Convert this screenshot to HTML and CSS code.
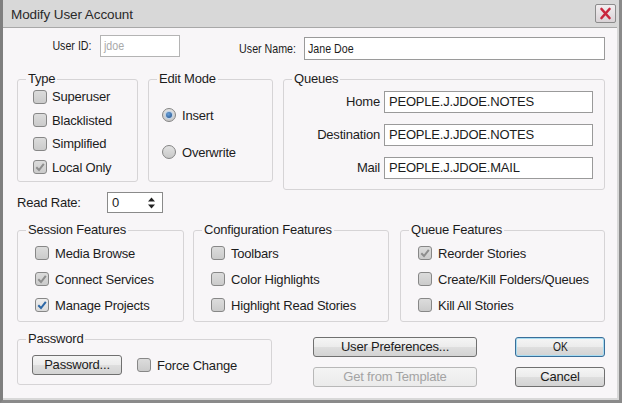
FILE: index.html
```html
<!DOCTYPE html>
<html>
<head>
<meta charset="utf-8">
<title>Modify User Account</title>
<link rel="stylesheet" href="styles.css">
</head>
<body>
<div class="window">
  <div class="titlebar">
    <span class="title">Modify User Account</span>
    <span class="close">
      <svg width="21" height="19" viewBox="0 0 21 19">
        <path d="M6.5 5 L14.5 14 M14.5 5 L6.5 14" stroke="#c9263d" stroke-width="2.6" stroke-linecap="round" fill="none"/>
      </svg>
    </span>
  </div>
  <div class="client">
    <div class="row1">
      <label class="lbl-id"><span class="cond cond-r">User ID:</span></label>
      <div class="field field-id disabled"><span class="cond cond-l">jdoe</span></div>
      <label class="lbl-name"><span class="cond cond-r">User Name:</span></label>
      <div class="field field-name"><span class="cond cond-l">Jane Doe</span></div>
    </div>

    <div class="row2">
      <fieldset class="group g-type">
        <legend>Type</legend>
        <div class="checks type-checks">
          <div class="check"><span class="box"></span>Superuser</div>
          <div class="check"><span class="box"></span>Blacklisted</div>
          <div class="check"><span class="box"></span>Simplified</div>
          <div class="check"><span class="box"><svg width="12" height="12" viewBox="0 0 12 12"><path d="M2.3 6.3 L5 9 L9.8 2.8" fill="none" stroke="#8d8d8d" stroke-width="2"/></svg></span>Local Only</div>
        </div>
      </fieldset>
      <fieldset class="group g-edit">
        <legend>Edit Mode</legend>
        <div class="radios">
          <div class="radio-row"><span class="radio on"></span>Insert</div>
          <div class="radio-row second"><span class="radio"></span>Overwrite</div>
        </div>
      </fieldset>
      <fieldset class="group g-queues">
        <legend>Queues</legend>
        <div class="qgrid">
          <span class="qlabel">Home</span>
          <div class="field qfield">PEOPLE.J.JDOE.NOTES</div>
          <span class="qlabel">Destination</span>
          <div class="field qfield">PEOPLE.J.JDOE.NOTES</div>
          <span class="qlabel">Mail</span>
          <div class="field qfield">PEOPLE.J.JDOE.MAIL</div>
        </div>
      </fieldset>
    </div>

    <div class="row3">
      <span class="rr-label">Read Rate:</span>
      <div class="spinner">
        <span class="spin-val">0</span>
        <svg class="spin-arrows" width="9" height="14" viewBox="0 0 9 14">
          <path d="M4.5 1.5 L8 5.5 L1 5.5 Z" fill="#222"/>
          <path d="M4.5 12.5 L8 8.5 L1 8.5 Z" fill="#222"/>
        </svg>
      </div>
    </div>

    <div class="row4">
      <fieldset class="group g-session">
        <legend>Session Features</legend>
        <div class="checks feat">
          <div class="check"><span class="box"></span>Media Browse</div>
          <div class="check"><span class="box"><svg width="12" height="12" viewBox="0 0 12 12"><path d="M2.3 6.3 L5 9 L9.8 2.8" fill="none" stroke="#8d8d8d" stroke-width="2"/></svg></span>Connect Services</div>
          <div class="check"><span class="box light"><svg width="12" height="12" viewBox="0 0 12 12"><path d="M2.3 6.3 L5 9 L9.8 2.8" fill="none" stroke="#2c67a6" stroke-width="2"/></svg></span>Manage Projects</div>
        </div>
      </fieldset>
      <fieldset class="group g-config">
        <legend>Configuration Features</legend>
        <div class="checks feat">
          <div class="check"><span class="box"></span>Toolbars</div>
          <div class="check"><span class="box"></span>Color Highlights</div>
          <div class="check"><span class="box"></span>Highlight Read Stories</div>
        </div>
      </fieldset>
      <fieldset class="group g-queuef">
        <legend>Queue Features</legend>
        <div class="checks feat">
          <div class="check"><span class="box"><svg width="12" height="12" viewBox="0 0 12 12"><path d="M2.3 6.3 L5 9 L9.8 2.8" fill="none" stroke="#8d8d8d" stroke-width="2"/></svg></span>Reorder Stories</div>
          <div class="check"><span class="box"></span>Create/Kill Folders/Queues</div>
          <div class="check"><span class="box"></span>Kill All Stories</div>
        </div>
      </fieldset>
    </div>

    <div class="row5">
      <fieldset class="group g-password">
        <legend>Password</legend>
        <div class="pw-content">
          <div class="btn pw-btn">Password...</div>
          <div class="check force"><span class="box"></span>Force Change</div>
        </div>
      </fieldset>
      <div class="btngrid">
        <div class="btn">User Preferences...</div>
        <div class="btn default"><span class="cond">OK</span></div>
        <div class="btn disabled-btn">Get from Template</div>
        <div class="btn">Cancel</div>
      </div>
    </div>
  </div>
</div>
</body>
</html>
```

FILE: styles.css
```css
* { box-sizing: border-box; }

body {
  margin: 0;
  font-family: "Liberation Sans", Arial, sans-serif;
  font-size: 13px;
  color: #1c1c1c;
  letter-spacing: -0.2px;
}

.cond {
  display: inline-block;
  transform: scaleX(0.79);
  letter-spacing: 0;
}
.cond-r { transform-origin: right center; }
.cond-l { transform-origin: left center; }

.window {
  width: 622px;
  height: 403px;
  background: #d8d8d8;
  border-left: 3px solid #7f7f7f;
  border-right: 3px solid #8a8a8a;
  border-bottom: 3px solid #8a8a8a;
  display: flex;
  flex-direction: column;
}

.titlebar {
  height: 27px;
  flex: none;
  display: flex;
  align-items: center;
  justify-content: space-between;
  padding: 0 3px 0 8px;
}

.title {
  font-size: 13.5px;
  color: #2a2a2a;
  letter-spacing: -0.1px;
  padding-top: 2px;
}

.close {
  width: 21px;
  height: 19px;
  border: 1px solid #8c8c8c;
  border-radius: 2px;
  background: linear-gradient(#f2eef0, #d9d3d6);
  display: flex;
  align-items: center;
  justify-content: center;
}
.close svg { display: block; margin: -1px; }

.client {
  flex: 1;
  margin: 0 2px 2px 0;
  background: #f8f6f8;
  border-top: 1px solid #a8a8a8;
  padding: 7px 12px 0 14px;
}

/* Row 1 */
.row1 {
  display: flex;
  align-items: flex-start;
  height: 37px;
  font-size: 13.5px;
}
.lbl-id {
  width: 83px;
  text-align: right;
  padding-right: 8px;
  line-height: 22px;
}
.field {
  background: #fff;
  border: 1px solid #9a9a9a;
  padding-left: 3px;
  white-space: nowrap;
}
.field-id {
  width: 81px;
  height: 22px;
  line-height: 20px;
  color: #a9a9a9;
  border-color: #b4b4b4;
}
.lbl-name {
  width: 124px;
  text-align: right;
  padding-right: 8px;
  margin-top: 2px;
  line-height: 23px;
}
.field-name {
  width: 303px;
  height: 23px;
  margin-top: 2px;
  line-height: 21px;
}

/* groups */
fieldset.group {
  margin: 0;
  padding: 0;
  border: 1px solid #d6d4d6;
  border-radius: 3px;
  min-width: 0;
}
fieldset.group legend {
  padding: 0 2px;
  margin-left: 8px;
  line-height: 14px;
  font-size: 13px;
}

.row2 {
  display: flex;
  align-items: flex-start;
  gap: 10px;
  height: 118px;
}
fieldset.g-type { width: 121px; height: 110px; }
fieldset.g-edit { width: 125px; height: 110px; }
fieldset.g-queues { width: 322px; height: 118px; }

.check {
  display: flex;
  align-items: center;
  white-space: nowrap;
}
.box {
  width: 14px;
  height: 14px;
  flex: none;
  border: 1px solid #878787;
  border-radius: 3px;
  background: linear-gradient(#dcdcdc, #cbcbcb);
  margin-right: 5px;
  display: flex;
  align-items: center;
  justify-content: center;
}
.box.light { background: linear-gradient(#eeeeee, #dadada); }
.box svg { display: block; }

.type-checks {
  padding-left: 15px;
  margin-top: -1px;
}
.type-checks .check { height: 23.5px; }

.radios {
  padding: 17px 0 0 13px;
}
.radio-row {
  display: flex;
  align-items: center;
  height: 24px;
}
.radio-row.second { margin-top: 13px; }
.radio {
  width: 14px;
  height: 14px;
  flex: none;
  border: 1px solid #848484;
  border-radius: 50%;
  background: linear-gradient(#e2e2e2, #c8c8c8);
  margin-right: 6px;
  display: flex;
  align-items: center;
  justify-content: center;
}
.radio.on::after {
  content: "";
  width: 6px;
  height: 6px;
  border-radius: 50%;
  background: radial-gradient(circle at 40% 35%, #6aa0d8, #1f4f8c);
  box-shadow: 0 0 0 1px #bcd3ea;
}

.qgrid {
  display: grid;
  grid-template-columns: 96px 209px;
  column-gap: 4px;
  row-gap: 11px;
  padding-top: 5px;
}
.qlabel {
  text-align: right;
  line-height: 22px;
}
.qfield {
  height: 22px;
  line-height: 20px;
  padding-left: 4px;
}

/* Row 3 */
.row3 {
  display: flex;
  align-items: center;
  margin-top: 2px;
  height: 21px;
}
.rr-label { width: 90px; }
.spinner {
  width: 56px;
  height: 21px;
  border: 1px solid #8a8a8a;
  background: #fff;
  display: flex;
  align-items: center;
  justify-content: space-between;
  padding: 0 6px 0 4px;
}
.spin-arrows { display: block; }

/* Row 4 */
.row4 {
  display: flex;
  align-items: flex-start;
  margin-top: 10px;
  height: 99px;
}
fieldset.g-session { width: 167px; height: 99px; }
fieldset.g-config { width: 196px; height: 99px; margin-left: 9px; }
fieldset.g-queuef { width: 205px; height: 99px; margin-left: 11px; }
.feat {
  padding: 3px 0 0 17px;
}
.feat .check { height: 26px; }
.feat .box { margin-right: 6px; }

/* Row 5 */
.row5 {
  display: flex;
  align-items: flex-start;
  margin-top: 10px;
}
fieldset.g-password { width: 255px; height: 53px; }
.pw-content {
  display: flex;
  align-items: center;
  padding: 9px 0 0 14px;
}
.btn {
  height: 20px;
  border: 1px solid #707070;
  border-radius: 3px;
  background: linear-gradient(#f5f5f5 0%, #ececec 48%, #dedede 52%, #d3d3d3 100%);
  text-align: center;
  line-height: 18px;
  white-space: nowrap;
}
.pw-btn { width: 90px; }
.force { margin-left: 15px; }
.force .box { margin-right: 6px; }

.btngrid {
  display: grid;
  grid-template-columns: 164px 90px;
  grid-template-rows: 20px 20px;
  column-gap: 38px;
  row-gap: 10px;
  margin: 5px 0 0 41px;
}
.btn.default {
  border-color: #3a6e99;
  box-shadow: inset 0 0 0 1px #a7dcf2;
}
.btn.disabled-btn {
  color: #a3a3a3;
  border-color: #b8b8b8;
  background: linear-gradient(#f4f4f4, #ebebeb);
}
```
